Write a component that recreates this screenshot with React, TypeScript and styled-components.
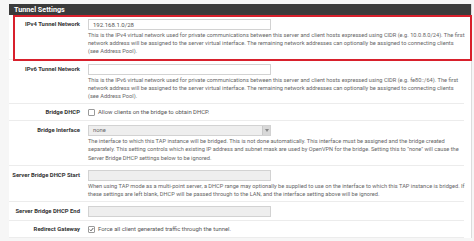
import React from "react";
import styled, { createGlobalStyle } from "styled-components";

const Global = createGlobalStyle`
  html, body { margin: 0; padding: 0; background: #f6f6f6; }
  body { font-family: Roboto, "Liberation Sans", Arial, sans-serif; }
`;

const Page = styled.div`
  width: 474px;
  height: 241px;
  overflow: hidden;
  padding: 4px 2px 0 9px;
  box-sizing: border-box;
  position: relative;
`;

const Panel = styled.div`
  background: #fff;
  border-right: 1px solid #dcdcdc;
`;

const Heading = styled.div`
  background: #3b3b3b;
  color: #fff;
  font-weight: 700;
  font-size: 7.2px;
  height: 11px;
  line-height: 11px;
  padding-left: 5px;
`;

const Row = styled.div<{ $check?: boolean }>`
  display: flex;
  align-items: flex-start;
  padding: ${(p) => (p.$check ? "3px 0 2px" : "4px 0 3px")};
  margin-right: 7px;
  border-bottom: 1px solid #ececec;
`;

const Label = styled.div`
  width: 79px;
  flex: none;
  text-align: right;
  font-weight: 700;
  font-size: 5.9px;
  color: #333;
  line-height: 11px;
  padding-right: 8px;
  box-sizing: border-box;
  white-space: nowrap;
`;

const Content = styled.div`
  flex: 1;
  min-width: 0;
  margin-right: -3px;
`;

const Input = styled.div<{ $disabled?: boolean }>`
  width: 183px;
  height: 11px;
  box-sizing: border-box;
  border: 1px solid #d2d2d2;
  background: ${(p) => (p.$disabled ? "#eeeeee" : "#fff")};
  font-size: 6px;
  line-height: 9px;
  padding-left: 4px;
  color: #555;
`;

const Select = styled.div`
  width: 183px;
  height: 11px;
  box-sizing: border-box;
  border: 1px solid #d2d2d2;
  background: #eeeeee;
  font-size: 5.8px;
  line-height: 9px;
  padding-left: 4px;
  color: #666;
  display: flex;
  justify-content: space-between;
`;

const Arrow = styled.div`
  width: 7px;
  height: 9px;
  background: #d8d8d8;
  border-left: 1px solid #c8c8c8;
  display: flex;
  align-items: center;
  justify-content: center;
`;

const Help = styled.div`
  font-size: 5.65px;
  line-height: 8.2px;
  color: #666;
  margin-top: 1px;
`;

const CheckLine = styled.label`
  display: flex;
  align-items: center;
  gap: 3px;
  font-size: 5.9px;
  line-height: 11px;
  color: #555;
`;

const Box = styled.span`
  width: 5px;
  height: 5px;
  border: 1px solid #9a9a9a;
  border-radius: 1px;
  background: #fff;
  display: inline-flex;
  align-items: center;
  justify-content: center;
  flex: none;
`;

const Highlight = styled.div`
  position: absolute;
  left: 13px;
  top: 15px;
  width: 459px;
  height: 46px;
  border: 2px solid #d8202c;
  box-sizing: border-box;
  pointer-events: none;
`;

export default function App() {
  return (
    <>
      <Global />
      <Page>
        <Panel>
          <Heading>Tunnel Settings</Heading>
          <Row>
            <Label>IPv4 Tunnel Network</Label>
            <Content>
              <Input>192.168.1.0/28</Input>
              <Help>
                This is the IPv4 virtual network used for private communications between this server and client hosts expressed using CIDR (e.g. 10.0.8.0/24). The first network address will be assigned to the server virtual interface. The remaining network addresses can optionally be assigned to connecting clients
                <br />
                (see Address Pool).
              </Help>
            </Content>
          </Row>
          <Row>
            <Label>IPv6 Tunnel Network</Label>
            <Content>
              <Input />
              <Help>
                This is the IPv6 virtual network used for private communications between this server and client hosts expressed using CIDR (e.g. fe80::/64). The first network address will be assigned to the server virtual interface. The remaining network addresses can optionally be assigned to connecting clients
                <br />
                (see Address Pool).
              </Help>
            </Content>
          </Row>
          <Row $check>
            <Label>Bridge DHCP</Label>
            <Content>
              <CheckLine>
                <Box />
                Allow clients on the bridge to obtain DHCP.
              </CheckLine>
            </Content>
          </Row>
          <Row>
            <Label>Bridge Interface</Label>
            <Content>
              <Select>
                none
                <Arrow>
                  <svg width="4" height="3" viewBox="0 0 4 3">
                    <path d="M0 0 L4 0 L2 3 Z" fill="#888" />
                  </svg>
                </Arrow>
              </Select>
              <Help>
                The interface to which this TAP instance will be bridged. This is not done automatically. This interface must be assigned and the bridge created separately. This setting controls which existing IP address and subnet mask are used by OpenVPN for the bridge. Setting this to "none" will cause the Server Bridge DHCP settings below to be ignored.
              </Help>
            </Content>
          </Row>
          <Row>
            <Label>Server Bridge DHCP Start</Label>
            <Content>
              <Input $disabled />
              <Help>
                When using TAP mode as a multi-point server, a DHCP range may optionally be supplied to use on the interface to which this TAP instance is bridged. If these settings are left blank, DHCP will be passed through to the LAN, and the interface setting above will be ignored.
              </Help>
            </Content>
          </Row>
          <Row>
            <Label>Server Bridge DHCP End</Label>
            <Content>
              <Input $disabled />
            </Content>
          </Row>
          <Row $check>
            <Label>Redirect Gateway</Label>
            <Content>
              <CheckLine>
                <Box>
                  <svg width="5" height="5" viewBox="0 0 5 5">
                    <path d="M0.8 2.6 L2 3.8 L4.3 1" stroke="#444" strokeWidth="0.9" fill="none" />
                  </svg>
                </Box>
                Force all client generated traffic through the tunnel.
              </CheckLine>
            </Content>
          </Row>
        </Panel>
        <Highlight />
      </Page>
    </>
  );
}
